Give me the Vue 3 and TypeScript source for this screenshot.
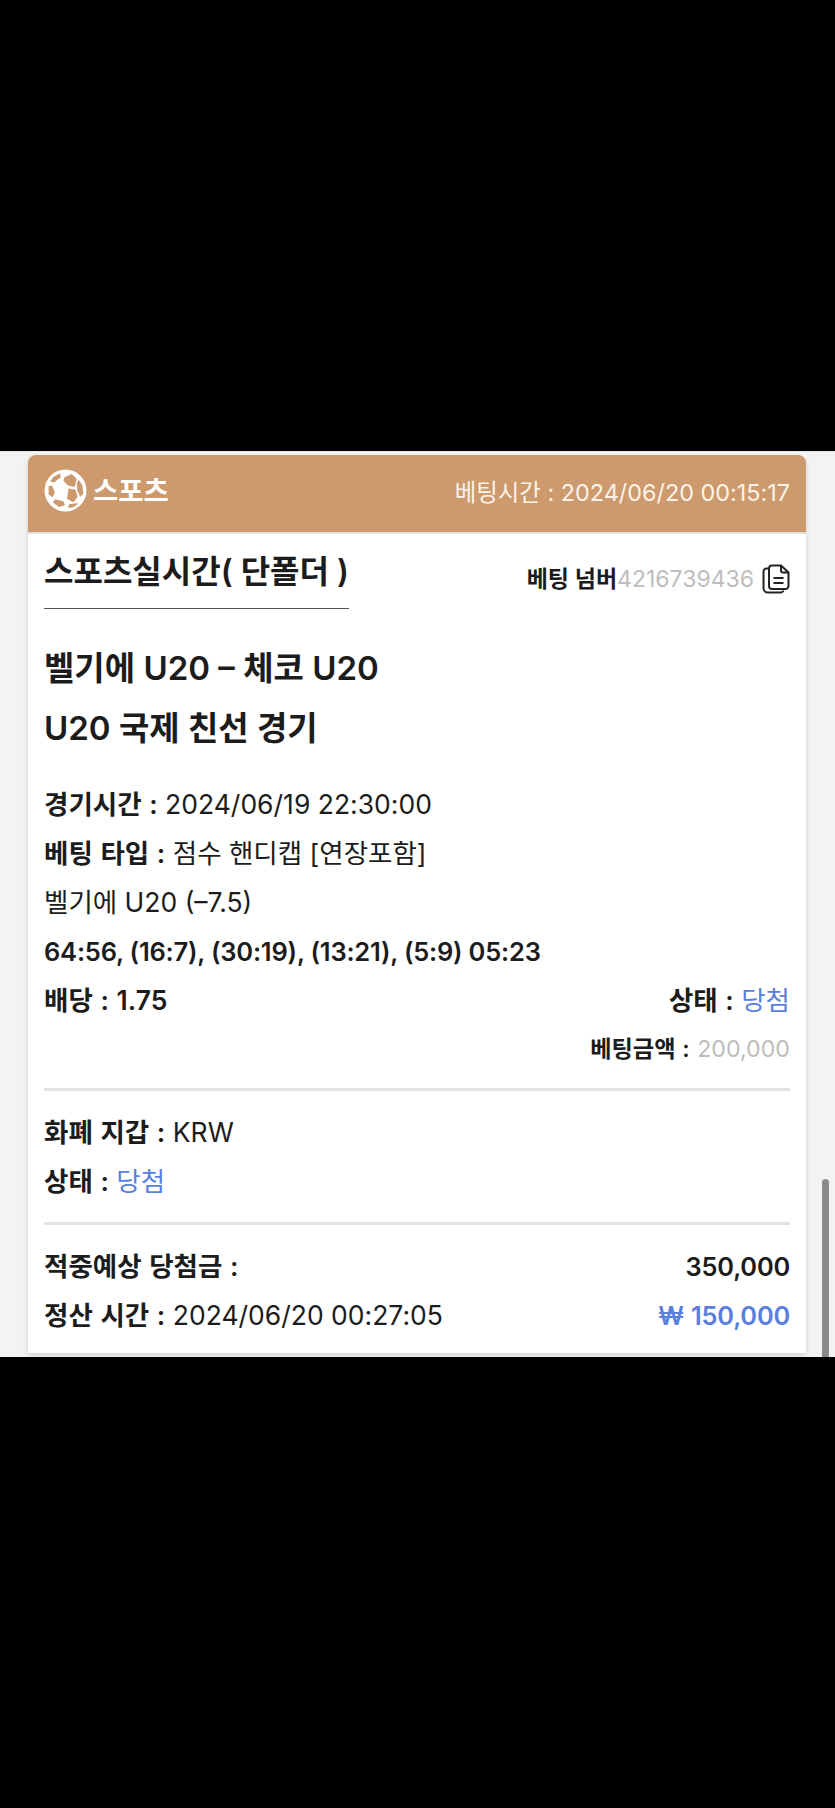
<template>
  <div class="screen">
    <div class="black-bar top"></div>
    <div class="page">
      <div class="card">
        <div class="card-head">
          <div class="head-left">
            <svg class="ball" viewBox="0 0 42 42" aria-hidden="true">
              <circle cx="21" cy="21" r="20.5" fill="#fff" />
              <g fill="#cd9a6d">
                <path d="M9.5 7.5 L15.5 4.5 L16.5 8 L9.5 13.5 L6 12 Z" />
                <path d="M20 8 L27 5 L32 9.5 L30 17.5 L23.5 16 L19 11.5 Z" />
                <path d="M34 10.5 L37.5 16 L38.5 24 L35.5 27 L32.5 21 L32 14 Z" />
                <path d="M24 19 L30.5 20 L33 27 L28.5 32.5 L22.5 29 Z" />
                <path d="M4.5 16.5 L8 16 L10.5 23 L8.5 27.5 L4.5 25 Z" />
                <path d="M11 29.5 L19 31.5 L20.5 35.5 L14.5 37 L8.5 32.5 Z" />
                <path d="M24.5 34.5 L31 33.5 L33.5 34 L28 37.5 L23.5 38 Z" />
              </g>
            </svg>
            <span class="sport">스포츠</span>
          </div>
          <span class="bet-time">베팅시간 : 2024/06/20 00:15:17</span>
        </div>

        <div class="card-body">
          <div class="title-row">
            <h2 class="page-title">스포츠실시간( 단폴더 )</h2>
            <div class="bet-no">
              <b>베팅 넘버</b><span class="muted">4216739436</span>
              <svg class="copy" viewBox="0 0 28 30" aria-hidden="true">
                <path d="M7 4.5 H4.5 A3 3 0 0 0 1.5 7.5 V24 A4.5 4.5 0 0 0 6 28.5 H19 A3 3 0 0 0 21.5 26.5" fill="none" stroke="#222" stroke-width="2" />
                <path d="M10 1.5 H19 L26.5 8.5 V22 A3 3 0 0 1 23.5 25 H10 A3 3 0 0 1 7 22 V4.5 A3 3 0 0 1 10 1.5 Z" fill="none" stroke="#222" stroke-width="2" />
                <path d="M19 2 V6.5 A2 2 0 0 0 21 8.5 H26" fill="none" stroke="#222" stroke-width="2" />
                <path d="M11.5 14 H21.5 M11.5 19 H21.5" fill="none" stroke="#222" stroke-width="2" />
              </svg>
            </div>
          </div>

          <div class="match">
            <div>벨기에 U20 – 체코 U20</div>
            <div>U20 국제 친선 경기</div>
          </div>

          <div class="rows">
            <div class="row"><span><b>경기시간 :</b> 2024/06/19 22:30:00</span></div>
            <div class="row"><span><b>베팅 타입 :</b> 점수 핸디캡 [연장포함]</span></div>
            <div class="row"><span>벨기에 U20 (–7.5)</span></div>
            <div class="row"><b class="score">64:56, (16:7), (30:19), (13:21), (5:9) 05:23</b></div>
            <div class="row between">
              <b>배당 : 1.75</b>
              <span><b>상태 :</b> <span class="blue">당첨</span></span>
            </div>
            <div class="row amount">
              <b class="small">베팅금액 :</b>&nbsp;<span class="muted small">200,000</span>
            </div>
          </div>

          <hr class="divider" />

          <div class="rows">
            <div class="row"><span><b>화폐 지갑 :</b> KRW</span></div>
            <div class="row"><span><b>상태 :</b> <span class="blue">당첨</span></span></div>
          </div>

          <hr class="divider second" />

          <div class="rows">
            <div class="row between">
              <b>적중예상 당첨금 :</b>
              <b class="money">350,000</b>
            </div>
            <div class="row between">
              <span><b>정산 시간 :</b> 2024/06/20 00:27:05</span>
              <b class="money blue">₩ 150,000</b>
            </div>
          </div>
        </div>
      </div>
      <div class="scrollbar"></div>
    </div>
    <div class="black-bar bottom"></div>
  </div>
</template>

<script setup lang="ts">
</script>

<style>
html,
body {
  margin: 0;
  background: #000;
}
</style>

<style scoped>
.screen {
  width: 835px;
  height: 1808px;
  display: flex;
  flex-direction: column;
  overflow: hidden;
  font-family: Inter, "Noto Sans CJK KR", sans-serif;
  color: #1c1c1c;
}

.black-bar {
  background: #000;
}
.black-bar.top {
  height: 451px;
}
.black-bar.bottom {
  flex: 1;
}

.page {
  position: relative;
  height: 906px;
  box-sizing: border-box;
  padding: 3px 29px 0 28px;
  background: #f4f3f2;
  border-top: 1px solid #e6e6e6;
}

.card {
  height: 898px;
  background: #fff;
  border-radius: 8px 8px 0 0;
  box-shadow: 0 2px 5px rgba(0, 0, 0, 0.14);
  overflow: hidden;
}

.card-head {
  height: 77px;
  box-sizing: content-box;
  padding: 0 16px;
  display: flex;
  align-items: center;
  justify-content: space-between;
  background: #cd9a6d;
  border-bottom: 2px solid #e2e0dd;
  color: #fff;
}

.head-left {
  display: flex;
  align-items: center;
  gap: 6px;
  margin-bottom: 6px;
}

.ball {
  width: 43px;
  height: 43px;
}

.sport {
  font-size: 27.5px;
  line-height: 36px;
  font-weight: 600;
}

.bet-time {
  margin-bottom: 6px;
  font-size: 23.4px;
  color: #fbf3ea;
}

.card-body {
  padding: 14px 16px 0;
}

.title-row {
  display: flex;
  align-items: flex-start;
  justify-content: space-between;
}

.page-title {
  margin: 0;
  width: 305px;
  height: 60px;
  font-size: 32px;
  line-height: 48px;
  font-weight: 600;
  white-space: nowrap;
  border-bottom: 1px solid #555;
}

.bet-no {
  display: flex;
  align-items: center;
  margin-top: 13px;
  font-size: 23px;
  line-height: 36px;
}
.bet-no b {
  font-weight: 600;
}

.copy {
  width: 28px;
  height: 30px;
  margin-left: 8px;
}

.muted {
  color: #bdbdbd;
}

.match {
  margin-top: 29px;
  font-size: 33px;
  line-height: 60px;
  font-weight: 600;
}

.rows {
  display: flex;
  flex-direction: column;
  font-size: 26.5px;
  line-height: 49px;
}

.match + .rows {
  margin-top: 22px;
}

.row {
  white-space: nowrap;
}

.row b {
  font-weight: 600;
  word-spacing: 1px;
}

.row .score {
  font-size: 25.5px;
  letter-spacing: -0.2px;
  word-spacing: 0;
}

.money {
  font-size: 25.4px;
  letter-spacing: -0.2px;
}

.between {
  display: flex;
  justify-content: space-between;
}

.amount {
  display: flex;
  justify-content: flex-end;
}

.row .small {
  font-size: 23.2px;
}

.blue {
  color: #5a7fdc;
}

.divider {
  margin: 14px 0 17px;
  border: 0;
  height: 3px;
  background: #e3e3e3;
}

.divider.second {
  margin-top: 16px;
}

.scrollbar {
  position: absolute;
  right: 6px;
  bottom: 0;
  width: 7px;
  height: 178px;
  border-radius: 4px 4px 0 0;
  background: #8c8c8c;
}
</style>
